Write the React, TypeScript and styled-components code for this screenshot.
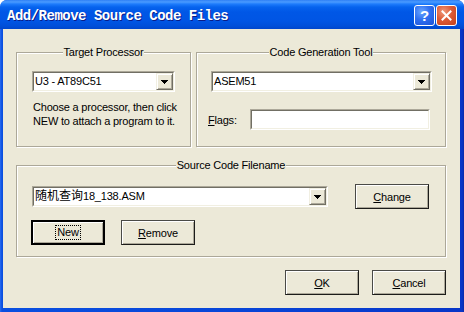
import React from 'react';
import styled, { createGlobalStyle } from 'styled-components';

const GlobalStyle = createGlobalStyle`
  html, body {
    margin: 0;
    padding: 0;
    background: #ffffff;
  }
  body {
    font-family: "Liberation Sans", Arial, sans-serif;
  }
`;

const Window = styled.div`
  width: 464px;
  height: 312px;
  display: flex;
  flex-direction: column;
  background: linear-gradient(to right, #2a6cf0 0, #0a4fe0 2px, #0846d8 50%, #0836c8 calc(100% - 2px), #0a2aa8 100%);
  border-radius: 7px 7px 0 0;
  overflow: hidden;
`;

const TitleBar = styled.div`
  height: 29px;
  flex: none;
  box-sizing: border-box;
  display: flex;
  align-items: center;
  padding: 2px 7px 0 7px;
  background: linear-gradient(
    180deg,
    #2f80f5 0px,
    #4a9bff 2px,
    #1e7cfc 4px,
    #0663ee 7px,
    #0057e6 12px,
    #0055e4 21px,
    #004fd9 26px,
    #0046cc 29px
  );
`;

const Title = styled.div`
  flex: 1;
  font-family: "Liberation Mono", "Courier New", monospace;
  font-weight: bold;
  font-size: 14px;
  letter-spacing: -0.5px;
  color: #ffffff;
  text-shadow: 1px 1px 0 #0a1c88;
  white-space: nowrap;
`;

const CaptionButtons = styled.div`
  display: flex;
  gap: 1px;
`;

const CaptionButton = styled.div<{ $kind: 'help' | 'close' }>`
  width: 21px;
  height: 21px;
  box-sizing: border-box;
  border: 1px solid #ffffff;
  border-radius: 3px;
  display: flex;
  align-items: center;
  justify-content: center;
  color: #ffffff;
  font-family: "Liberation Sans", Arial, sans-serif;
  font-weight: bold;
  font-size: 15px;
  background: ${(p) =>
    p.$kind === 'help'
      ? 'radial-gradient(circle at 35% 30%, #6aa6ff 0, #2f6ff0 45%, #1c52d6 100%)'
      : 'radial-gradient(circle at 35% 30%, #f09a7c 0, #dc5a36 45%, #c2401c 100%)'};
`;

const Body = styled.div`
  flex: 1;
  margin: 0 4px 4px 3px;
  background: #ece9d8;
  padding: 23px 14px 0 13px;
  font-size: 11px;
  letter-spacing: -0.2px;
  color: #000000;
`;

const TopRow = styled.div`
  display: flex;
  gap: 5px;
`;

const Group = styled.div<{ $width?: number; $height: number; $mt?: number }>`
  box-sizing: border-box;
  width: ${(p) => (p.$width ? `${p.$width}px` : 'auto')};
  height: ${(p) => p.$height}px;
  margin-top: ${(p) => p.$mt ?? 0}px;
  display: flex;
  flex-direction: column;
  border: 1px solid #aca899;
  box-shadow: inset 1px 1px 0 #ffffff, 1px 1px 0 #ffffff;
`;

const Legend = styled.div`
  align-self: center;
  margin-top: -7px;
  height: 13px;
  line-height: 13px;
  padding: 0 1px;
  background: #ece9d8;
  white-space: nowrap;
`;

const Row = styled.div<{ $mt: number; $indent: number; $gap?: number }>`
  display: flex;
  align-items: center;
  margin-top: ${(p) => p.$mt}px;
  padding-left: ${(p) => p.$indent}px;
  gap: ${(p) => p.$gap ?? 0}px;
`;

const Hint = styled.div`
  margin-top: 8px;
  padding-left: 16px;
  line-height: 14px;
  white-space: nowrap;
`;

const Sunken = styled.div<{ $width: number }>`
  width: ${(p) => p.$width}px;
  height: 21px;
  box-sizing: border-box;
  flex: none;
  border: 1px solid;
  border-color: #aca899 #ffffff #ffffff #aca899;
`;

const Field = styled.div`
  height: 100%;
  box-sizing: border-box;
  display: flex;
  align-items: center;
  background: #ffffff;
  border: 1px solid;
  border-color: #716f64 #f1efe2 #f1efe2 #716f64;
`;

const FieldText = styled.div`
  flex: 1;
  padding-left: 1px;
  line-height: 15px;
  white-space: nowrap;
  overflow: hidden;
`;

const Cjk = styled.span`
  font-family: "Liberation Sans", "Noto Sans CJK SC", sans-serif;
  font-size: 12px;
  letter-spacing: 0;
`;

const DropButton = styled.div`
  width: 17px;
  height: 100%;
  box-sizing: border-box;
  display: flex;
  align-items: center;
  justify-content: center;
  background: #ece9d8;
  border: 1px solid;
  border-color: #f1efe2 #716f64 #716f64 #f1efe2;
  box-shadow: inset 1px 1px 0 #ffffff, inset -1px -1px 0 #aca899;
`;

const FieldLabel = styled.div`
  width: 42px;
  flex: none;
`;

const Button = styled.button<{ $default?: boolean; $ml?: number }>`
  width: 74px;
  height: 25px;
  flex: none;
  box-sizing: border-box;
  margin: 0 0 0 ${(p) => p.$ml ?? 0}px;
  padding: 0;
  font-family: "Liberation Sans", Arial, sans-serif;
  font-size: 11px;
  letter-spacing: -0.2px;
  color: #000000;
  background: #ece9d8;
  border: ${(p) => (p.$default ? '2px solid #000000' : '1px solid')};
  border-color: ${(p) => (p.$default ? '#000000' : '#4a4a46 #1c1c1a #1c1c1a #4a4a46')};
  box-shadow: inset 1px 1px 0 #ffffff, inset -1px -1px 0 #aca899;
  display: flex;
  align-items: center;
  justify-content: center;
`;

const FocusRect = styled.span`
  border: 1px dotted #000000;
  padding: 0 1px;
  line-height: 13px;
`;

const Footer = styled.div`
  display: flex;
  justify-content: flex-end;
  gap: 13px;
  margin-top: 13px;
`;

const Arrow = () => (
  <svg width="7" height="4" viewBox="0 0 7 4" shapeRendering="crispEdges">
    <rect x="0" y="0" width="7" height="1" fill="#000" />
    <rect x="1" y="1" width="5" height="1" fill="#000" />
    <rect x="2" y="2" width="3" height="1" fill="#000" />
    <rect x="3" y="3" width="1" height="1" fill="#000" />
  </svg>
);

const CloseGlyph = () => (
  <svg width="11" height="11" viewBox="0 0 11 11">
    <path d="M1.5 1.5 L9.5 9.5 M9.5 1.5 L1.5 9.5" stroke="#fff" strokeWidth="2" strokeLinecap="square" />
  </svg>
);

const ComboBox = ({ width, children }: { width: number; children: React.ReactNode }) => (
  <Sunken $width={width}>
    <Field>
      <FieldText>{children}</FieldText>
      <DropButton>
        <Arrow />
      </DropButton>
    </Field>
  </Sunken>
);

const TextBox = ({ width }: { width: number }) => (
  <Sunken $width={width}>
    <Field />
  </Sunken>
);

export default function App() {
  return (
    <>
      <GlobalStyle />
      <Window>
        <TitleBar>
          <Title>Add/Remove Source Code Files</Title>
          <CaptionButtons>
            <CaptionButton $kind="help">?</CaptionButton>
            <CaptionButton $kind="close">
              <CloseGlyph />
            </CaptionButton>
          </CaptionButtons>
        </TitleBar>
        <Body>
          <TopRow>
            <Group $width={175} $height={95}>
              <Legend>Target Processor</Legend>
              <Row $mt={12} $indent={15}>
                <ComboBox width={143}>U3 - AT89C51</ComboBox>
              </Row>
              <Hint>
                Choose a processor, then click
                <br />
                NEW to attach a program to it.
              </Hint>
            </Group>
            <Group $width={250} $height={95}>
              <Legend>Code Generation Tool</Legend>
              <Row $mt={12} $indent={14}>
                <ComboBox width={221}>ASEM51</ComboBox>
              </Row>
              <Row $mt={17} $indent={11}>
                <FieldLabel>
                  <u>F</u>lags:
                </FieldLabel>
                <TextBox width={180} />
              </Row>
            </Group>
          </TopRow>
          <Group $height={92} $mt={18}>
            <Legend>Source Code Filename</Legend>
            <Row $mt={12} $indent={15}>
              <ComboBox width={296}>
                <Cjk>随机查询</Cjk>18_138.ASM
              </ComboBox>
              <Button type="button" $ml={27}>
                <u>C</u>hange
              </Button>
            </Row>
            <Row $mt={11} $indent={14} $gap={16}>
              <Button type="button" $default>
                <FocusRect>New</FocusRect>
              </Button>
              <Button type="button">
                <u>R</u>emove
              </Button>
            </Row>
          </Group>
          <Footer>
            <Button type="button">
              <u>O</u>K
            </Button>
            <Button type="button">
              <u>C</u>ancel
            </Button>
          </Footer>
        </Body>
      </Window>
    </>
  );
}
